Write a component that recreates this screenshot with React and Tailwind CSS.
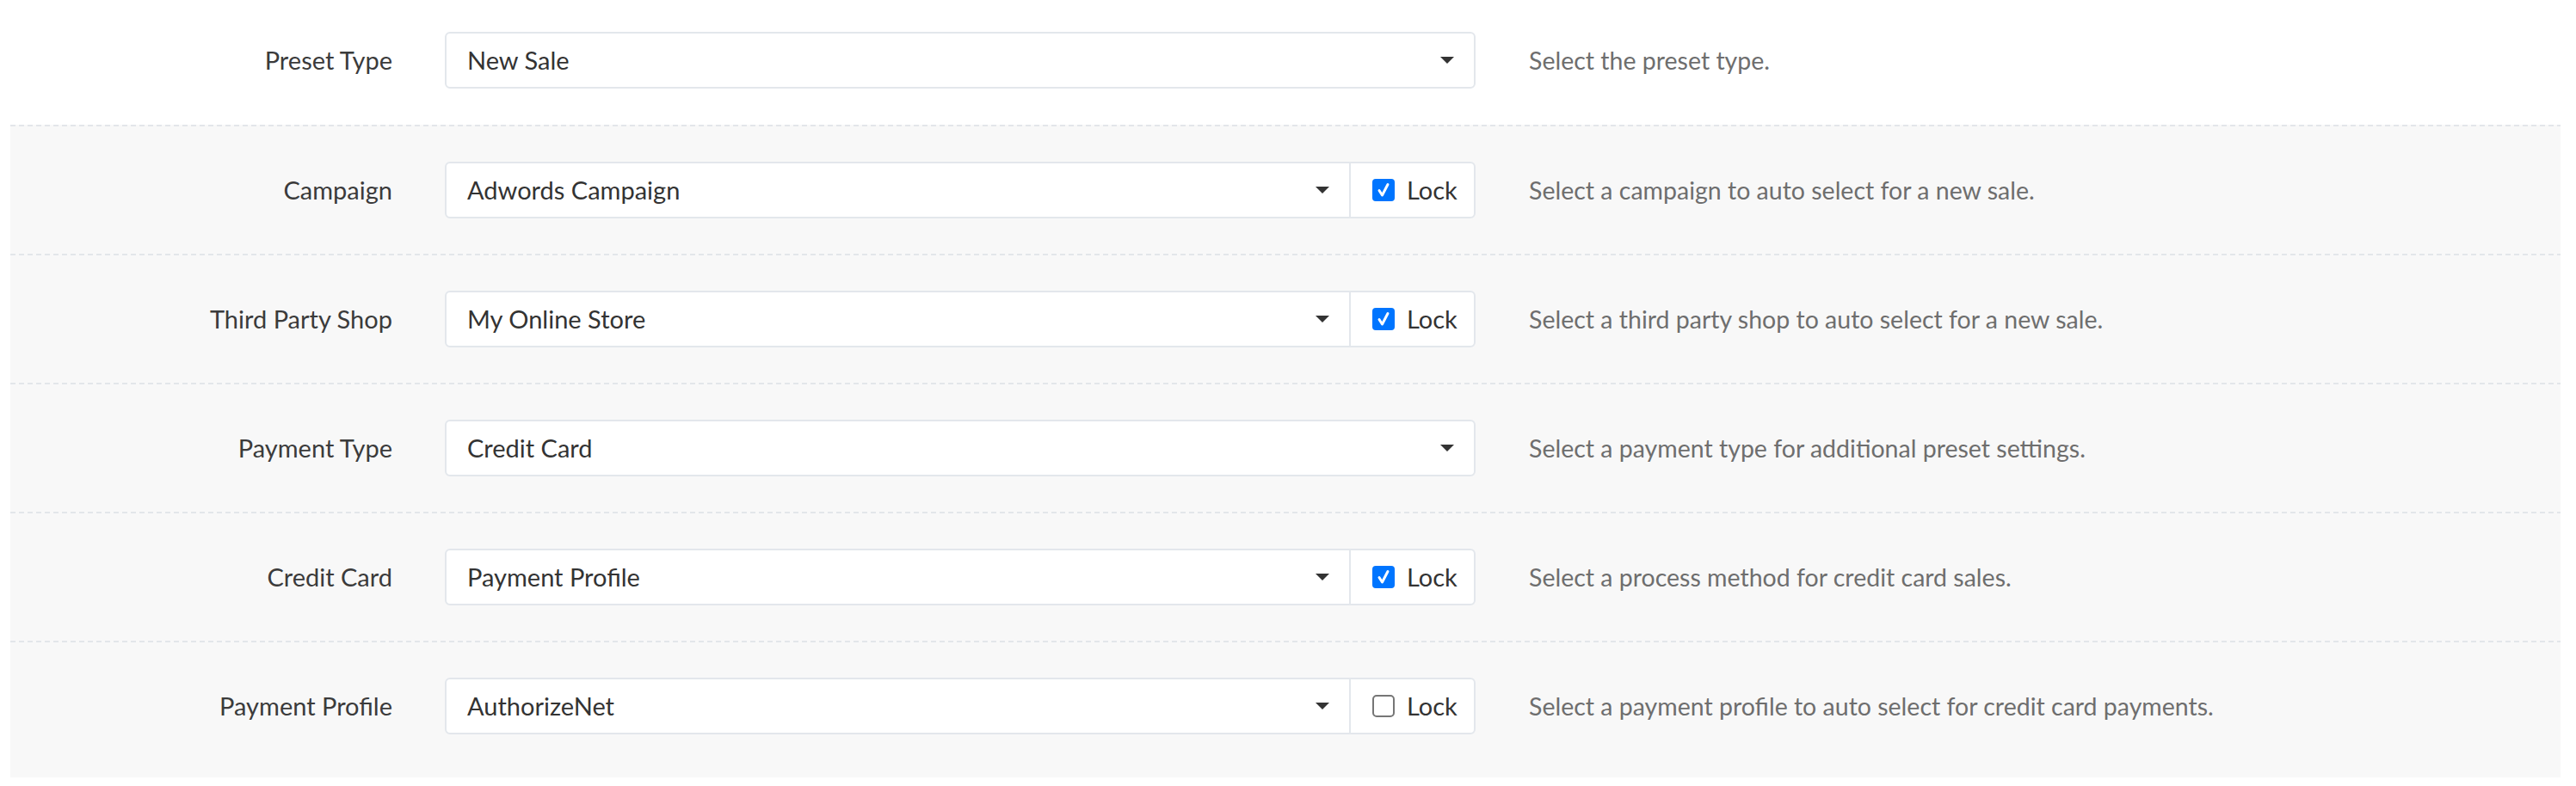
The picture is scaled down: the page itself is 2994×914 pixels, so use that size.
import { useState } from 'react'

const rows = [
  { label: 'Preset Type', value: 'New Sale', lock: null, help: 'Select the preset type.' },
  { label: 'Campaign', value: 'Adwords Campaign', lock: true, help: 'Select a campaign to auto select for a new sale.' },
  { label: 'Third Party Shop', value: 'My Online Store', lock: true, help: 'Select a third party shop to auto select for a new sale.' },
  { label: 'Payment Type', value: 'Credit Card', lock: null, help: 'Select a payment type for additional preset settings.' },
  { label: 'Credit Card', value: 'Payment Profile', lock: true, help: 'Select a process method for credit card sales.' },
  { label: 'Payment Profile', value: 'AuthorizeNet', lock: false, help: 'Select a payment profile to auto select for credit card payments.' }
]

function Caret() {
  return (
    <svg width="16" height="8" viewBox="0 0 16 8" className="shrink-0">
      <path d="M0 0 H16 L8 8 Z" fill="#333" />
    </svg>
  )
}

function LockBox({ checked, onToggle }) {
  return (
    <label
      onClick={onToggle}
      className="flex items-center gap-[14px] w-[145px] h-full pl-[25px] border-l-2 border-[#e3e7ec] cursor-pointer"
    >
      {checked ? (
        <span className="flex items-center justify-center w-[26px] h-[26px] rounded-[4px] bg-[#0075ff]">
          <svg width="16" height="18" viewBox="0 0 16 18">
            <path d="M3 9.5 L6.5 15 L13 2.5" fill="none" stroke="#fff" strokeWidth="3" strokeLinecap="round" strokeLinejoin="round" />
          </svg>
        </span>
      ) : (
        <span className="w-[26px] h-[26px] rounded-[5px] border-2 border-[#767676] bg-white" />
      )}
      <span className="text-[#333]">Lock</span>
    </label>
  )
}

function Row({ row, first }) {
  const [locked, setLocked] = useState(row.lock)

  return (
    <div>
      {!first && (
        <div className="h-[2px] bg-[repeating-linear-gradient(to_right,#e3e6ea_0_6px,transparent_6px_10px)]" />
      )}
      <div className={`flex items-center ${first ? 'h-[145px] pb-[5px]' : 'h-[148px]'}`}>
        <div className="w-[444px] text-right text-[29px] text-[#3b3b3b]">{row.label}</div>
        <div className="ml-[61px] flex items-center w-[1198px] h-[66px] bg-white border-2 border-[#e3e7ec] rounded-[6px]">
          <div className="flex-1 flex items-center justify-between pl-[24px] pr-[23px] h-full text-[#333]">
            <span>{row.value}</span>
            <Caret />
          </div>
          {row.lock !== null && <LockBox checked={locked} onToggle={() => setLocked(!locked)} />}
        </div>
        <div className="ml-[62px] text-[28.5px] text-[#6e6e6e]">{row.help}</div>
      </div>
    </div>
  )
}

export default function App() {
  return (
    <div className="min-h-screen bg-white text-[29px] font-['Lato',sans-serif]">
      <div className="mx-[12px]">
        <Row row={rows[0]} first />
      </div>
      <div className="mx-[12px] mr-[18px] pb-[9px] bg-[#f8f8f8]">
        {rows.slice(1).map((row) => (
          <Row key={row.label} row={row} />
        ))}
      </div>
    </div>
  )
}
